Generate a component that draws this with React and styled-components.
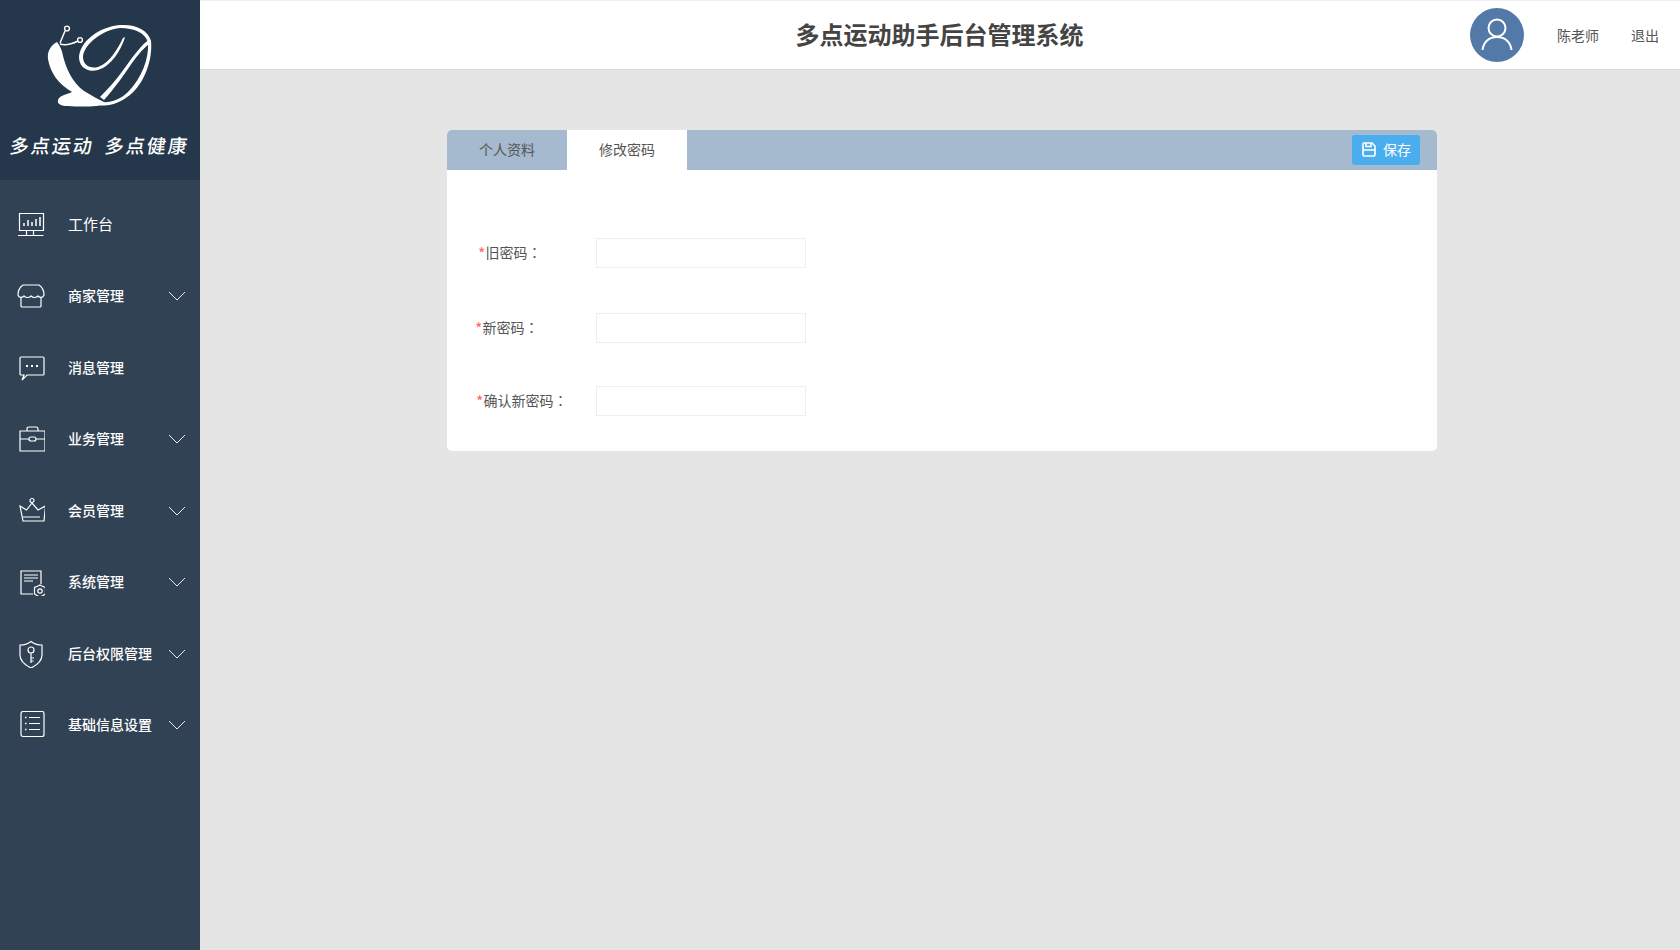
import styled, { createGlobalStyle } from "styled-components"

const Global = createGlobalStyle`
html, body { margin: 0; padding: 0; height: 100%; }
body { font-family: "Noto Sans CJK SC", "Liberation Sans", sans-serif; font-size: 14px; overflow: hidden; }
* { box-sizing: border-box; }
`

const Page = styled.div`
display: flex;
width: 100vw;
height: 100vh;
background: #e5e5e5;
`

const Sidebar = styled.aside`
width: 200px;
flex-shrink: 0;
background: #314254;
`

const LogoBox = styled.div`
height: 180px;
background: #25374a;
display: flex;
flex-direction: column;
align-items: center;
padding-top: 24px;
`

const Slogan = styled.div`
margin-top: 19px;
display: flex;
gap: 11px;
color: #fff;
font-size: 19px;
line-height: 24px;
font-weight: 500;
letter-spacing: 2px;
white-space: nowrap;
transform: skewX(-8deg);
`

const Menu = styled.nav`
padding-top: 8px;
`

const MenuItem = styled.div`
height: 71.5px;
display: flex;
align-items: center;
padding-left: 17px;
color: #fff;
`

const MenuIcon = styled.svg`
width: 28px;
height: 28px;
flex-shrink: 0;
margin: 2px 23px 0 0;
fill: none;
stroke: #fff;
stroke-width: 1.2;
`

const MenuText = styled.span`
flex: 1;
font-size: ${p => p.$size || 14}px;
font-weight: ${p => (p.$size ? 400 : 500)};
line-height: 20px;
`

const Chevron = styled.svg`
width: 18px;
height: 10px;
margin: 2px 14px 0 0;
fill: none;
stroke: #e8ecf0;
stroke-width: 1;
`

const Right = styled.div`
flex: 1;
min-width: 0;
`

const Header = styled.header`
height: 70px;
display: grid;
grid-template-columns: 1fr auto 1fr;
align-items: center;
background: #fff;
border-top: 1px solid #eee;
border-bottom: 1px solid #d8d8d8;
`

const Title = styled.h1`
grid-column: 2;
margin: 0 1px 2px 0;
font-size: 24px;
line-height: 34px;
font-weight: 700;
color: #444;
`

const UserBox = styled.div`
grid-column: 3;
display: flex;
align-items: center;
justify-content: flex-end;
padding-right: 21px;
`

const Avatar = styled.div`
width: 54px;
height: 54px;
border-radius: 50%;
background: #5379a8;
display: flex;
align-items: center;
justify-content: center;
margin-right: 33px;
`

const UserLink = styled.span`
font-size: 14px;
color: #555;
margin-left: ${p => p.$gap || 0}px;
`

const Main = styled.main`
padding: 60px 243px 0 247px;
`

const Card = styled.section`
background: #fff;
border-radius: 5px;
height: 321px;
overflow: hidden;
`

const TabBar = styled.div`
height: 40px;
display: flex;
align-items: center;
background: #a5b9cf;
padding-right: 17px;
`

const Tab = styled.div`
width: 120px;
height: 40px;
line-height: 38px;
text-align: center;
font-size: 14px;
color: #555;
background: ${p => (p.$active ? "#fff" : "transparent")};
`

const SaveButton = styled.button`
margin-left: auto;
width: 68px;
height: 30px;
padding: 0 0 2px 1px;
border: none;
border-radius: 3px;
background: #4aaeee;
color: #fff;
font-family: inherit;
font-size: 14px;
display: flex;
align-items: center;
justify-content: center;
gap: 7px;
`

const Form = styled.form`
padding-top: 68px;
display: flex;
flex-direction: column;
`

const Row = styled.div`
display: flex;
align-items: center;
height: 30px;
margin-bottom: ${p => p.$after || 0}px;
`

const LabelCell = styled.div`
width: 149px;
padding: 0 0 2px ${p => p.$indent}px;
flex-shrink: 0;
`

const Label = styled.label`
font-size: 14px;
color: #555;
white-space: nowrap;
`

const Star = styled.span`
color: #f66;
font-size: 16px;
line-height: 14px;
vertical-align: -2px;
`

const Colon = styled.span`
font-family: "Noto Sans CJK TC", sans-serif;
`

const Input = styled.input`
width: 210px;
height: 30px;
border: 1px solid #eee;
background: #fff;
outline: none;
`

const Logo = () => (
  <svg width="110" height="90" viewBox="45 24 110 90" fill="#fff">
    <path d="M57 42 C50 46 47 52 48 59 C50 72 58 84 72 92 C66 95 60 95 58 100 C57 104 61 106 68 106 C82 107 96 107 108 104 C100 100 92 96 84 91 C72 82 66 68 63 56 C62 50 60 46 57 42 Z" />
    <path d="M60 43 L65 31 M60 44 C66 46 72 44 78 41" fill="none" stroke="#fff" strokeWidth="1.5" />
    <circle cx="67" cy="28.5" r="2.4" fill="none" stroke="#fff" strokeWidth="1.4" />
    <circle cx="80" cy="40" r="2.4" fill="none" stroke="#fff" strokeWidth="1.4" />
    <path d="M125 37 C122 48 112 66 98 70 C86 73 79 66 79 57 C80 42 98 27 120 25 C136 24 148 30 151 41 C153 60 144 84 130 95 C120 103 108 107 100 105 L97 102 C108 104 120 100 128 92 C142 78 149 58 148 43 C146 33 134 28 120 28 C102 30 84 44 83 57 C83 65 90 69 98 67 C110 63 118 48 123 38 Z" />
    <path d="M150 39 C142 44 134 55 124 69 C116 80 108 89 100 97 L104 100 C114 89 124 75 132 63 C138 54 145 47 151 42 Z" />
  </svg>
)

const MonitorIcon = () => (
  <MenuIcon viewBox="0 0 28 28">
    <path d="M2.5 2.5 H26.5 V19.5 H2.5 Z M1 24.5 H26.5 M9.5 19.5 V24.5 M16.5 19.5 V24.5" />
    <path d="M7 15 V12 M11 15 V9 M15 15 V11 M19 15 V8 M23 15 V6" strokeWidth="1.5" />
  </MenuIcon>
)

const ShopIcon = () => (
  <MenuIcon viewBox="0 0 28 28">
    <path d="M6 3 H22 C25 5 27 9 27 13 C26 16 23 16 21 14 C19 16 16 16 14 14 C12 16 9 16 7 14 C5 16 2 16 1 13 C1 9 3 5 6 3 Z" />
    <path d="M4 16 V24 Q4 25 5 25 H23 Q24 25 24 24 V16" />
  </MenuIcon>
)

const ChatIcon = () => (
  <MenuIcon viewBox="0 0 28 28">
    <path d="M4 3 H26 Q27 3 27 4 V20 Q27 21 26 21 H10 L5 26 L7 21 H4 Q3 21 3 20 V4 Q3 3 4 3 Z" />
    <path d="M9 12 H11 M14 12 H16 M19 12 H21" strokeWidth="2" />
  </MenuIcon>
)

const CaseIcon = () => (
  <MenuIcon viewBox="0 0 28 28">
    <path d="M3 6 H28 V26 H3 Z M3 14 H12 M19 14 H28 M10 6 V4 Q10 2 12 2 H19 Q21 2 21 4 V6" />
    <rect x="12" y="12" width="7" height="4" rx="2" />
  </MenuIcon>
)

const CrownIcon = () => (
  <MenuIcon viewBox="0 0 28 28">
    <circle cx="15" cy="3.5" r="2" />
    <path d="M15 6 L9.5 13 L3 9 L6 24 H27 L28.5 9 L21 13 Z M6 20 H23" />
  </MenuIcon>
)

const DocIcon = () => (
  <MenuIcon viewBox="0 0 28 28">
    <path d="M24 16 V3 H4 V26 H16" />
    <path d="M7 7 H21 M7 10 H21 M7 13 H16" />
    <circle cx="23" cy="23" r="2.2" />
    <path d="M23 17 L25.5 18.2 L28.5 19.5 L28.5 26 L25.5 27.8 L23 29 L20.5 27.8 L17.5 26 L17.5 19.5 L20.5 18.2 Z" />
  </MenuIcon>
)

const ShieldIcon = () => (
  <MenuIcon viewBox="0 0 28 28">
    <path d="M14 1.5 C17 4 21 5 25 5 V15 C25 21 20 25 14 28 C8 25 3 21 3 15 V5 C7 5 11 4 14 1.5 Z" />
    <circle cx="14" cy="10" r="3" />
    <path d="M14 13 V23 M14 18 H17 M14 21 H16.5" />
  </MenuIcon>
)

const ListIcon = () => (
  <MenuIcon viewBox="0 0 28 28">
    <rect x="4" y="0.5" width="23" height="25" rx="2" />
    <path d="M8 6.5 H9.5 M8 12.5 H9.5 M8 18.5 H9.5" strokeWidth="1.5" />
    <path d="M12 6.5 H23 M12 12.5 H23 M12 18.5 H23" />
  </MenuIcon>
)

const menus = [
  { name: "工作台", Icon: MonitorIcon, size: 15 },
  { name: "商家管理", Icon: ShopIcon, more: true },
  { name: "消息管理", Icon: ChatIcon },
  { name: "业务管理", Icon: CaseIcon, more: true },
  { name: "会员管理", Icon: CrownIcon, more: true },
  { name: "系统管理", Icon: DocIcon, more: true },
  { name: "后台权限管理", Icon: ShieldIcon, more: true },
  { name: "基础信息设置", Icon: ListIcon, more: true },
]

const fields = [
  { label: "旧密码", indent: 31, after: 45 },
  { label: "新密码", indent: 28, after: 43 },
  { label: "确认新密码", indent: 29, after: 0 },
]

const App = () => {
  return (
    <Page>
      <Global />
      <Sidebar>
        <LogoBox>
          <Logo />
          <Slogan>
            <span>多点运动</span>
            <span>多点健康</span>
          </Slogan>
        </LogoBox>
        <Menu>
          {menus.map(({ name, Icon, more, size }) => (
            <MenuItem key={name}>
              <Icon />
              <MenuText $size={size}>{name}</MenuText>
              {more && (
                <Chevron viewBox="0 0 18 10">
                  <path d="M1 1 L9 9 L17 1" />
                </Chevron>
              )}
            </MenuItem>
          ))}
        </Menu>
      </Sidebar>
      <Right>
        <Header>
          <Title>多点运动助手后台管理系统</Title>
          <UserBox>
            <Avatar>
              <svg width="32" height="34" viewBox="0 0 32 34" fill="none" stroke="#fff" strokeWidth="2">
                <circle cx="16" cy="10" r="8.5" />
                <path d="M1.5 32 C2.5 24 8 19 16 19 C24 19 29.5 24 30.5 32" />
              </svg>
            </Avatar>
            <UserLink>陈老师</UserLink>
            <UserLink $gap={32}>退出</UserLink>
          </UserBox>
        </Header>
        <Main>
          <Card>
            <TabBar>
              <Tab>个人资料</Tab>
              <Tab $active>修改密码</Tab>
              <SaveButton type="button">
                <svg width="14" height="15" viewBox="0 0 14 15" fill="none" stroke="#fff" strokeWidth="1.6">
                  <path d="M1 2 Q1 1 2 1 H10 L13 4 V13 Q13 14 12 14 H2 Q1 14 1 13 Z M1 8 H13 M4 1 V4.5 H9 V1" />
                </svg>
                保存
              </SaveButton>
            </TabBar>
            <Form>
              {fields.map(f => (
                <Row key={f.label} $after={f.after}>
                  <LabelCell $indent={f.indent}>
                    <Label>
                      <Star>*</Star>
                      {f.label}
                      <Colon>：</Colon>
                    </Label>
                  </LabelCell>
                  <Input type="password" />
                </Row>
              ))}
            </Form>
          </Card>
        </Main>
      </Right>
    </Page>
  )
}

export default App
